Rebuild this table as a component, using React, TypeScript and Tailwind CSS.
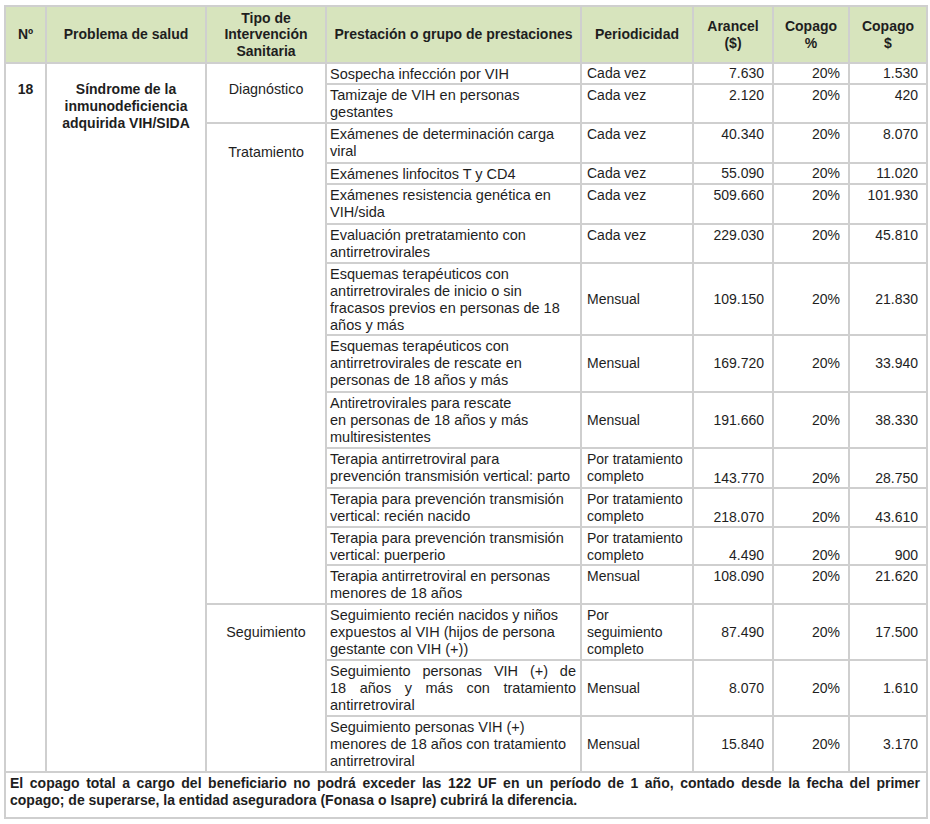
type Row = {
  h: string;
  p: string[];
  just?: boolean;
  per: string[];
  perAlign: string;
  numAlign: string;
  arancel: string;
  copago: string;
};

const rows: Row[] = [
  { h: 'h-[21px]', p: ['Sospecha infección por VIH'], per: ['Cada vez'], perAlign: 'align-middle', numAlign: 'align-middle', arancel: '7.630', copago: '1.530' },
  { h: 'h-[39px]', p: ['Tamizaje de VIH en personas', 'gestantes'], per: ['Cada vez'], perAlign: 'align-top', numAlign: 'align-top', arancel: '2.120', copago: '420' },
  { h: 'h-[40px]', p: ['Exámenes de determinación carga', 'viral'], per: ['Cada vez'], perAlign: 'align-top', numAlign: 'align-top', arancel: '40.340', copago: '8.070' },
  { h: 'h-[21px]', p: ['Exámenes linfocitos T y CD4'], per: ['Cada vez'], perAlign: 'align-middle', numAlign: 'align-middle', arancel: '55.090', copago: '11.020' },
  { h: 'h-[40px]', p: ['Exámenes resistencia genética en', 'VIH/sida'], per: ['Cada vez'], perAlign: 'align-top', numAlign: 'align-top', arancel: '509.660', copago: '101.930' },
  { h: 'h-[39px]', p: ['Evaluación pretratamiento con', 'antirretrovirales'], per: ['Cada vez'], perAlign: 'align-top', numAlign: 'align-top', arancel: '229.030', copago: '45.810' },
  { h: 'h-[71px]', p: ['Esquemas terapéuticos con', 'antirretrovirales de inicio o sin', 'fracasos previos en personas de 18', 'años y más'], per: ['Mensual'], perAlign: 'align-middle', numAlign: 'align-middle', arancel: '109.150', copago: '21.830' },
  { h: 'h-[57px]', p: ['Esquemas terapéuticos con', 'antirretrovirales de rescate en', 'personas de 18 años y más'], per: ['Mensual'], perAlign: 'align-middle', numAlign: 'align-middle', arancel: '169.720', copago: '33.940' },
  { h: 'h-[56px]', p: ['Antiretrovirales para rescate', 'en personas de 18 años y más', 'multiresistentes'], per: ['Mensual'], perAlign: 'align-middle', numAlign: 'align-middle', arancel: '191.660', copago: '38.330' },
  { h: 'h-[40px]', p: ['Terapia antirretroviral para', 'prevención transmisión vertical: parto'], per: ['Por tratamiento', 'completo'], perAlign: 'align-top', numAlign: 'align-bottom', arancel: '143.770', copago: '28.750' },
  { h: 'h-[39px]', p: ['Terapia para prevención transmisión', 'vertical: recién nacido'], per: ['Por tratamiento', 'completo'], perAlign: 'align-top', numAlign: 'align-bottom', arancel: '218.070', copago: '43.610' },
  { h: 'h-[38px]', p: ['Terapia para prevención transmisión', 'vertical: puerperio'], per: ['Por tratamiento', 'completo'], perAlign: 'align-top', numAlign: 'align-bottom', arancel: '4.490', copago: '900' },
  { h: 'h-[39px]', p: ['Terapia antirretroviral en personas', 'menores de 18 años'], per: ['Mensual'], perAlign: 'align-top', numAlign: 'align-top', arancel: '108.090', copago: '21.620' },
  { h: 'h-[56px]', p: ['Seguimiento recién nacidos y niños', 'expuestos al VIH (hijos de persona', 'gestante con VIH (+))'], per: ['Por', 'seguimiento', 'completo'], perAlign: 'align-middle', numAlign: 'align-middle', arancel: '87.490', copago: '17.500' },
  { h: 'h-[56px]', p: ['Seguimiento personas VIH (+) de', '18 años y más con tratamiento', 'antirretroviral'], just: true, per: ['Mensual'], perAlign: 'align-middle', numAlign: 'align-middle', arancel: '8.070', copago: '1.610' },
  { h: 'h-[56px]', p: ['Seguimiento personas VIH (+)', 'menores de 18 años con tratamiento', 'antirretroviral'], per: ['Mensual'], perAlign: 'align-middle', numAlign: 'align-middle', arancel: '15.840', copago: '3.170' },
];

const cell = 'border-2 border-[#cfcfcf] px-[5px]';

function Lines({ lines, just }: { lines: string[]; just?: boolean }) {
  return (
    <>
      {lines.map((l, i) => (
        <div
          key={i}
          className={
            just && i < lines.length - 1
              ? 'whitespace-nowrap text-justify [text-align-last:justify]'
              : 'whitespace-nowrap'
          }
        >
          {l}
        </div>
      ))}
    </>
  );
}

export default function App() {
  return (
    <div className="bg-white min-h-screen pl-[4px] pt-[5px] font-['Liberation_Sans',Arial,sans-serif] text-[14px] leading-[17px] text-[#1e1e1e]">
      <table className="border-collapse table-fixed w-[922px]">
        <colgroup>
          <col className="w-[41px]" />
          <col className="w-[160px]" />
          <col className="w-[120px]" />
          <col className="w-[255px]" />
          <col className="w-[112px]" />
          <col className="w-[80px]" />
          <col className="w-[76px]" />
          <col className="w-[78px]" />
        </colgroup>
        <thead>
          <tr className="h-[57px] bg-[#d7e4bd] font-bold leading-[16.5px]">
            <th className={`${cell} text-center align-middle`}>Nº</th>
            <th className={`${cell} text-center align-middle`}>Problema de salud</th>
            <th className={`${cell} text-center align-middle`}>
              Tipo de
              <br />
              Intervención
              <br />
              Sanitaria
            </th>
            <th className={`${cell} text-center align-middle whitespace-nowrap`}>Prestación o grupo de prestaciones</th>
            <th className={`${cell} text-center align-middle`}>Periodicidad</th>
            <th className={`${cell} text-center align-middle`}>
              Arancel
              <br />
              ($)
            </th>
            <th className={`${cell} text-center align-middle`}>
              Copago
              <br />%
            </th>
            <th className={`${cell} text-center align-middle`}>
              Copago
              <br />$
            </th>
          </tr>
        </thead>
        <tbody>
          {rows.map((r, i) => (
            <tr key={i} className={r.h}>
              {i === 0 && (
                <>
                  <td rowSpan={16} className={`${cell} align-top text-center font-bold pt-[17px]`}>
                    18
                  </td>
                  <td rowSpan={16} className={`${cell} align-top text-center font-bold pt-[17px]`}>
                    Síndrome de la
                    <br />
                    inmunodeficiencia
                    <br />
                    adquirida VIH/SIDA
                  </td>
                </>
              )}
              {i === 0 && (
                <td rowSpan={2} className={`${cell} align-top text-center pt-[17px] text-[14.3px]`}>
                  Diagnóstico
                </td>
              )}
              {i === 2 && (
                <td rowSpan={11} className={`${cell} align-top text-center pt-[20px] text-[14.3px]`}>
                  Tratamiento
                </td>
              )}
              {i === 13 && (
                <td rowSpan={3} className={`${cell} align-top text-center pt-[19px] text-[14.3px]`}>
                  Seguimiento
                </td>
              )}
              <td className={`${cell} align-top pt-[2px] pl-[3px] pr-[4px] text-[14.5px]`}>
                <Lines lines={r.p} just={r.just} />
              </td>
              <td className={`${cell} ${r.perAlign} ${r.perAlign === 'align-top' ? 'pt-[2px]' : ''}`}>
                <Lines lines={r.per} />
              </td>
              <td className={`${cell} ${r.numAlign} text-right pr-[8px] ${r.numAlign === 'align-top' ? 'pt-[2px]' : ''}`}>
                {r.arancel}
              </td>
              <td className={`${cell} ${r.numAlign} text-right pr-[8px] ${r.numAlign === 'align-top' ? 'pt-[2px]' : ''}`}>
                20%
              </td>
              <td className={`${cell} ${r.numAlign} text-right pr-[8px] ${r.numAlign === 'align-top' ? 'pt-[2px]' : ''}`}>
                {r.copago}
              </td>
            </tr>
          ))}
          <tr className="h-[46px]">
            <td colSpan={8} className={`${cell} align-top font-bold pt-[2px] pl-[4px] pr-[6px]`}>
              <div className="text-justify [text-align-last:justify] whitespace-nowrap">
                El copago total a cargo del beneficiario no podrá exceder las 122 UF en un período de 1 año, contado desde la fecha del primer
              </div>
              <div>copago; de superarse, la entidad aseguradora (Fonasa o Isapre) cubrirá la diferencia.</div>
            </td>
          </tr>
        </tbody>
      </table>
    </div>
  );
}
